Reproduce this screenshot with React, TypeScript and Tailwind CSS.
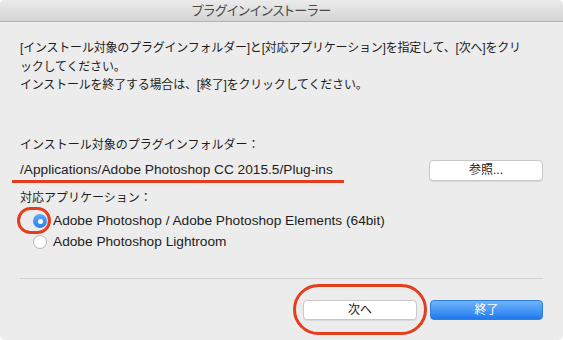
export default function App() {
    return (
        <div className="w-[563px] h-[340px] bg-white font-['Liberation_Sans','Noto_Sans_CJK_JP',sans-serif]">
            <div className="relative w-full h-full bg-[#ececec] rounded-[5px] overflow-hidden text-[#1c1c1c]">
                {/* title bar */}
                <div className="h-[22px] border-b border-[#b3b3b3] bg-gradient-to-b from-[#ebebeb] to-[#d4d4d4] flex items-center justify-center pr-[40px]">
                    <span className="text-[13px] text-[#4a4a4a] [font-feature-settings:'palt']">プラグインインストーラー</span>
                </div>

                <div className="px-5 pt-[17px]">
                    <p className="text-[12px] leading-[18.5px] tracking-[-0.2px]">
                        [インストール対象のプラグインフォルダー]と[対応アプリケーション]を指定して、[次へ]をクリ
                        <br />
                        ックしてください。
                        <br />
                        インストールを終了する場合は、[終了]をクリックしてください。
                    </p>

                    <div className="mt-[41px] text-[12px] leading-[18px]">インストール対象のプラグインフォルダー：</div>

                    <div className="mt-[6px] h-[21px] flex items-center justify-between">
                        <span className="text-[13.7px]">/Applications/Adobe Photoshop CC 2015.5/Plug-ins</span>
                        <button className="w-[114px] h-[21px] rounded-[4px] bg-white border border-[#c8c8c8] shadow-[0_1px_0_rgba(0,0,0,0.08)] text-[12px] text-[#222]">
                            参照...
                        </button>
                    </div>

                    <div className="mt-[8px] text-[12px] leading-[18px]">対応アプリケーション：</div>

                    <div className="mt-[4px] ml-[13px] flex flex-col">
                        <label className="h-[21px] flex items-center gap-[6px]">
                            <span className="w-[14px] h-[14px] rounded-full bg-gradient-to-b from-[#5aa8fb] to-[#2a80f0] flex items-center justify-center">
                                <span className="w-[5px] h-[5px] rounded-full bg-white" />
                            </span>
                            <span className="text-[13.7px]">Adobe Photoshop / Adobe Photoshop Elements (64bit)</span>
                        </label>
                        <label className="h-[21px] flex items-center gap-[6px]">
                            <span className="w-[14px] h-[14px] rounded-full bg-white border border-[#b4b4b4]" />
                            <span className="text-[13.7px]">Adobe Photoshop Lightroom</span>
                        </label>
                    </div>

                    <div className="mt-[25px] h-px bg-[#d2d2d2]" />

                    <div className="mt-[21px] flex justify-end gap-[13px]">
                        <button className="w-[114px] h-[20px] rounded-[4px] bg-white border border-[#c8c8c8] shadow-[0_1px_0_rgba(0,0,0,0.08)] text-[12px] text-[#222]">
                            次へ
                        </button>
                        <button className="w-[113px] h-[20px] rounded-[4px] bg-gradient-to-b from-[#6db4fb] to-[#1c79ee] border border-[#2f7fe0] text-[12px] text-white">
                            終了
                        </button>
                    </div>
                </div>

                {/* red annotations */}
                <div className="absolute left-[12px] top-[180px] w-[332px] h-[3px] bg-[#e53d1e]" />
                <div className="absolute left-[17px] top-[207px] w-[34px] h-[27px] rounded-full border-[3px] border-[#e53d1e]" />
                <div className="absolute left-[293px] top-[284px] w-[134px] h-[51px] rounded-full border-[3px] border-[#e53d1e]" />
            </div>
        </div>
    );
}
